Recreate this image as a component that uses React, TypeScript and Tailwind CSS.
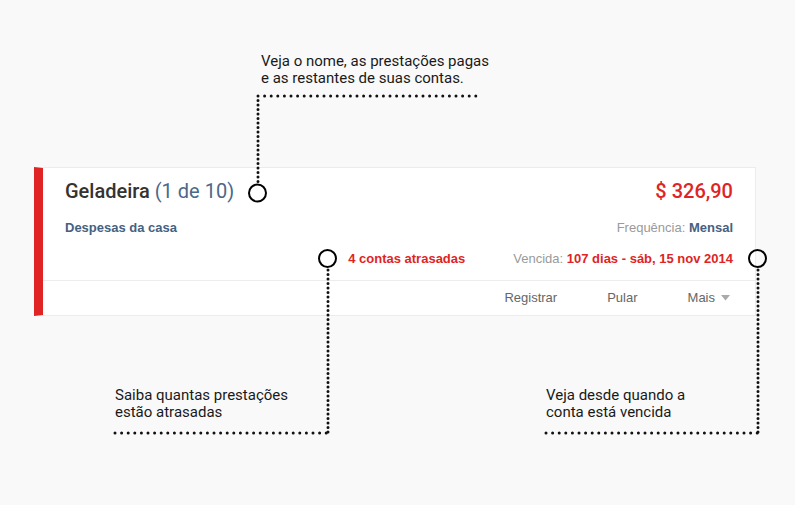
import React from "react";

const RED = "#e02424";

function Overlay() {
  const dotH = { stroke: "#111", strokeWidth: 3, strokeLinecap: "round" as const, strokeDasharray: "0 6.6" };
  const dotV = { stroke: "#111", strokeWidth: 3, strokeLinecap: "round" as const, strokeDasharray: "0 4.5" };
  return (
    <svg className="absolute inset-0 pointer-events-none" width={795} height={505} viewBox="0 0 795 505">
      {/* top annotation */}
      <line x1={258} y1={96} x2={476} y2={96} {...dotH} />
      <line x1={258} y1={100.5} x2={258} y2={183} {...dotV} />
      <circle cx={257.5} cy={193} r={8.5} fill="none" stroke="#000" strokeWidth={2} />
      {/* left bottom */}
      <circle cx={327.5} cy={258.5} r={8.5} fill="none" stroke="#000" strokeWidth={2} />
      <line x1={328} y1={270} x2={328} y2={433} {...dotV} />
      <line x1={115} y1={433} x2={328} y2={433} {...dotH} />
      {/* right bottom */}
      <circle cx={757.5} cy={258.5} r={8.5} fill="none" stroke="#000" strokeWidth={2} />
      <line x1={758} y1={270} x2={758} y2={433} {...dotV} />
      <line x1={546} y1={433} x2={758} y2={433} {...dotH} />
    </svg>
  );
}

export default function App() {
  return (
    <div
      className="relative w-[795px] h-[505px] overflow-hidden bg-[#f9f9f9] text-[#222]"
      style={{ fontFamily: "Roboto, 'Liberation Sans', sans-serif" }}
    >
      {/* top annotation text */}
      <div className="pt-[53px] pl-[261px] text-[15px] leading-[17px] text-[#1a1a1a]">
        <div>Veja o nome, as prestações pagas</div>
        <div>e as restantes de suas contas.</div>
      </div>

      {/* card */}
      <div className="ml-[34px] mt-[80px] w-[722px] h-[149px] bg-white border border-[#ececec] border-l-[9px] border-l-[#e02424] flex flex-col">
        <div className="flex items-center justify-between h-[46px] pl-[22px] pr-[22px]">
          <div className="text-[20px] font-medium text-[#333]">
            Geladeira <span className="font-normal text-[#4b6889]">(1 de 10)</span>
          </div>
          <div className="text-[20px] font-medium text-[#e02424]">$ 326,90</div>
        </div>
        <div
          className="flex items-center justify-between h-[28px] pl-[22px] pr-[22px] text-[13px]"
          style={{ fontFamily: "'Liberation Sans', Arial, sans-serif" }}
        >
          <div className="font-bold text-[#45617f]">Despesas da casa</div>
          <div className="text-[#9a9a9a]">
            Frequência: <span className="font-bold text-[#45617f]">Mensal</span>
          </div>
        </div>
        <div
          className="flex items-center justify-end h-[34px] pr-[22px] text-[13px]"
          style={{ fontFamily: "'Liberation Sans', Arial, sans-serif" }}
        >
          <div className="font-bold" style={{ color: RED }}>4 contas atrasadas</div>
          <div className="ml-[48px] text-[#9a9a9a]">
            Vencida: <span className="font-bold" style={{ color: RED }}>107 dias - sáb, 15 nov 2014</span>
          </div>
        </div>
        <div className="mt-[4px] border-t border-[#ececec] flex-1 flex items-center justify-end pr-[25px] gap-[50px] text-[13px] text-[#666]"
          style={{ fontFamily: "'Liberation Sans', Arial, sans-serif" }}
        >
          <span>Registrar</span>
          <span>Pular</span>
          <span className="flex items-center gap-[6px]">
            Mais
            <svg width="9" height="6" viewBox="0 0 9 6"><path d="M0 0 L9 0 L4.5 5.5 Z" fill="#aaa" /></svg>
          </span>
        </div>
      </div>

      {/* bottom annotations */}
      <div className="flex mt-[71px] text-[15px] leading-[17px] text-[#1a1a1a]">
        <div className="ml-[115px] w-[220px]">
          <div>Saiba quantas prestações</div>
          <div>estão atrasadas</div>
        </div>
        <div className="ml-[211px]">
          <div>Veja desde quando a</div>
          <div>conta está vencida</div>
        </div>
      </div>

      <Overlay />
    </div>
  );
}
